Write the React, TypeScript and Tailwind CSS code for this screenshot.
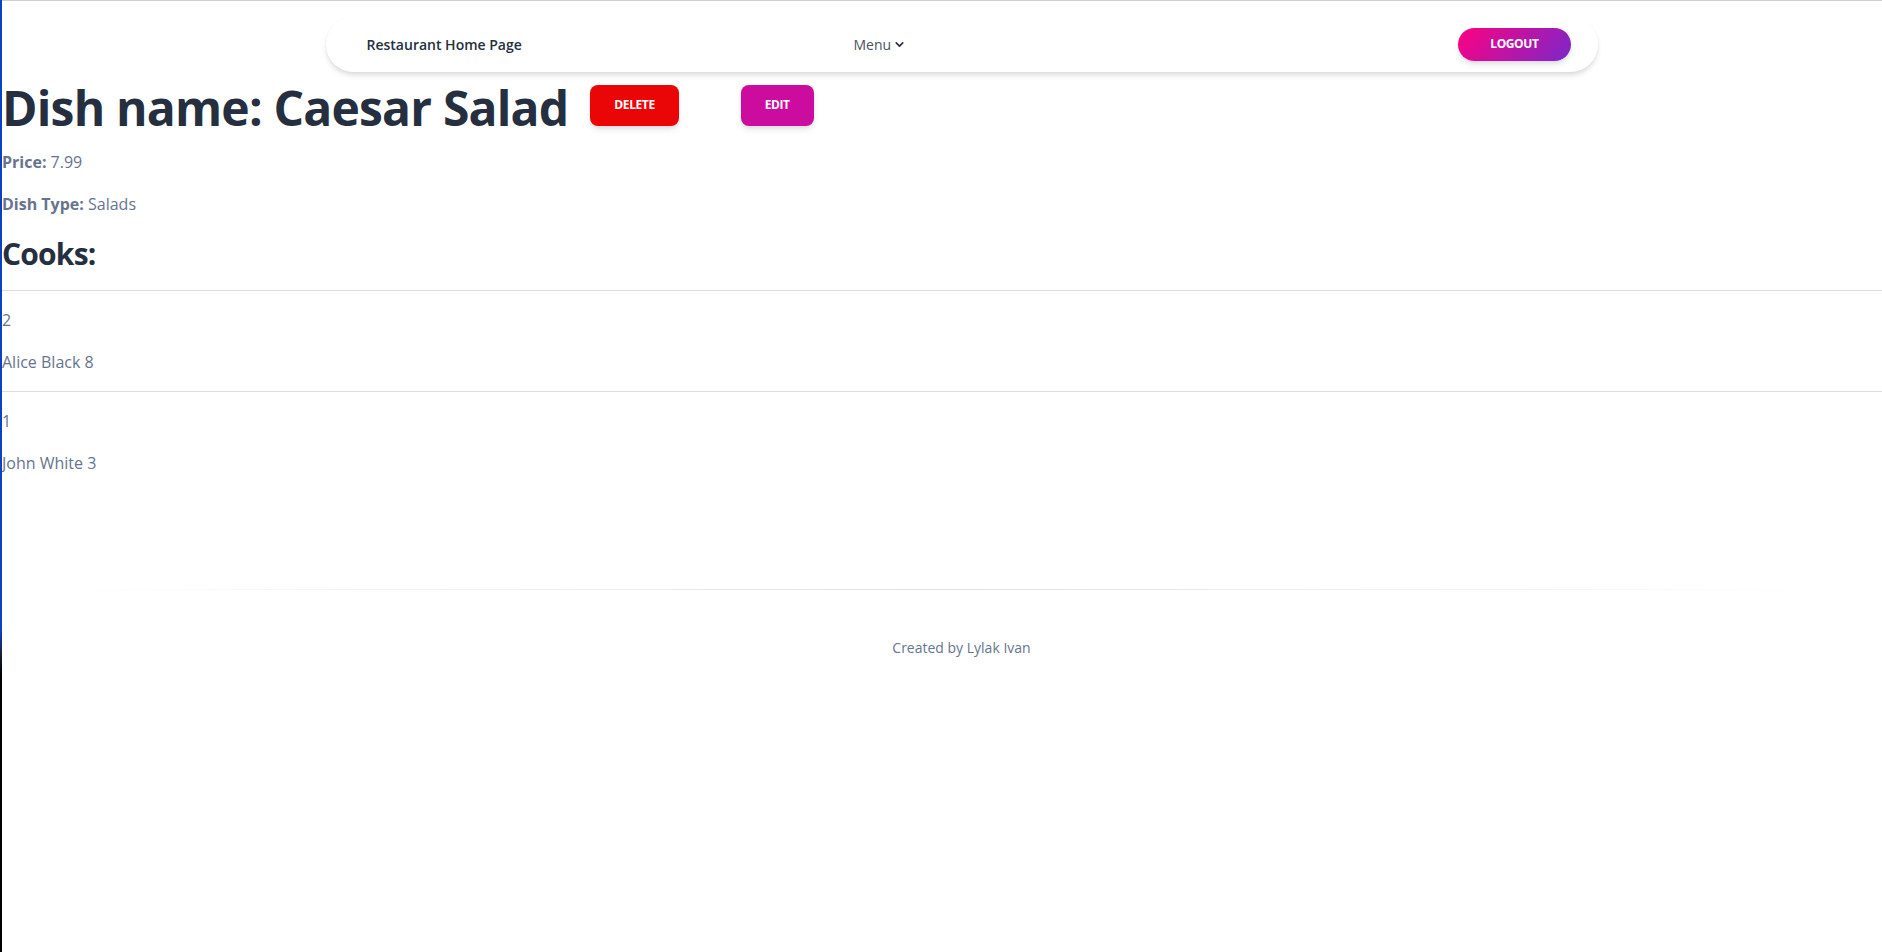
import { ChevronDown } from "lucide-react";

const cooks = [
  { id: 2, name: "Alice Black", exp: 8 },
  { id: 1, name: "John White", exp: 3 },
];

const btnShadow = "shadow-[0_4px_7px_-1px_rgba(0,0,0,0.11),0_2px_4px_-1px_rgba(0,0,0,0.07)]";

export default function App() {
  return (
    <div className="relative min-h-screen bg-white font-['Open_Sans',sans-serif] text-[#67748e]">
      <div className="absolute left-0 top-0 h-full w-[2px] bg-[linear-gradient(to_bottom,#0b42c4_0,#0b42c4_630px,#1a1f2e_655px,#000_675px,#000_100%)]" />
      <div className="h-[2px] border-t border-[#cfcfcf]" />

      <div className="pl-[41px]">
        <nav className="mx-auto mt-[15px] flex h-[55px] w-[1272px] items-center rounded-full bg-white pl-[41px] pr-[27px] shadow-[0_4px_6px_-1px_rgba(20,20,20,0.12),0_2px_4px_-1px_rgba(20,20,20,0.07)]">
          <span className="w-[487px] text-sm font-semibold text-[#252f40]">Restaurant Home Page</span>
          <span className="flex items-center gap-[2px] text-sm text-[#4a5263]">
            Menu
            <ChevronDown className="h-[13px] w-[13px] text-[#252f40]" strokeWidth={3} />
          </span>
          <button className={`ml-auto rounded-full bg-[linear-gradient(310deg,#7928ca,#ff0080)] px-8 py-2 text-xs font-bold uppercase leading-[1.4] tracking-[-0.025rem] text-white ${btnShadow}`}>
            Logout
          </button>
        </nav>
      </div>

      <main className="mt-[2px] pl-[2px]">
        <div className="flex items-start">
          <h1 className="pt-1 text-5xl font-bold leading-[1.25] tracking-[-0.05rem] text-[#252f40]">Dish name: Caesar Salad</h1>
          <button className={`ml-[22px] mt-[11px] rounded-lg bg-[#ea0606] px-6 py-3 text-xs font-bold uppercase leading-[1.4] tracking-[-0.025rem] text-white ${btnShadow}`}>
            Delete
          </button>
          <button className={`ml-[62px] mt-[11px] rounded-lg bg-[#cb0c9f] px-6 py-3 text-xs font-bold uppercase leading-[1.4] tracking-[-0.025rem] text-white ${btnShadow}`}>
            Edit
          </button>
        </div>
        <p className="mt-[11px] text-base leading-[1.625]">
          <b className="font-bold">Price:</b> 7.99
        </p>
        <p className="mt-4 text-base leading-[1.625]">
          <b className="font-bold">Dish Type:</b> Salads
        </p>
        <h3 className="mt-4 text-[30px] font-bold leading-[1.375] tracking-[-0.05rem] text-[#252f40]">Cooks:</h3>
        {cooks.map((c) => (
          <div key={c.id}>
            <hr className="-ml-[2px] my-4 border-t border-[#dcdde3]" />
            <p className="text-base leading-[1.625]">{c.id}</p>
            <p className="mt-4 text-base leading-[1.625]">
              {c.name} {c.exp}
            </p>
          </div>
        ))}
      </main>

      <footer className="mt-[113px]">
        <div className="mx-[50px] h-px bg-[linear-gradient(90deg,transparent,rgba(0,0,0,0.12),transparent)]" />
        <div className="flex justify-center pl-[41px] pt-[47px]">
          <p className="text-sm leading-normal text-[#67748e]">Created by Lylak Ivan</p>
        </div>
      </footer>
    </div>
  );
}
